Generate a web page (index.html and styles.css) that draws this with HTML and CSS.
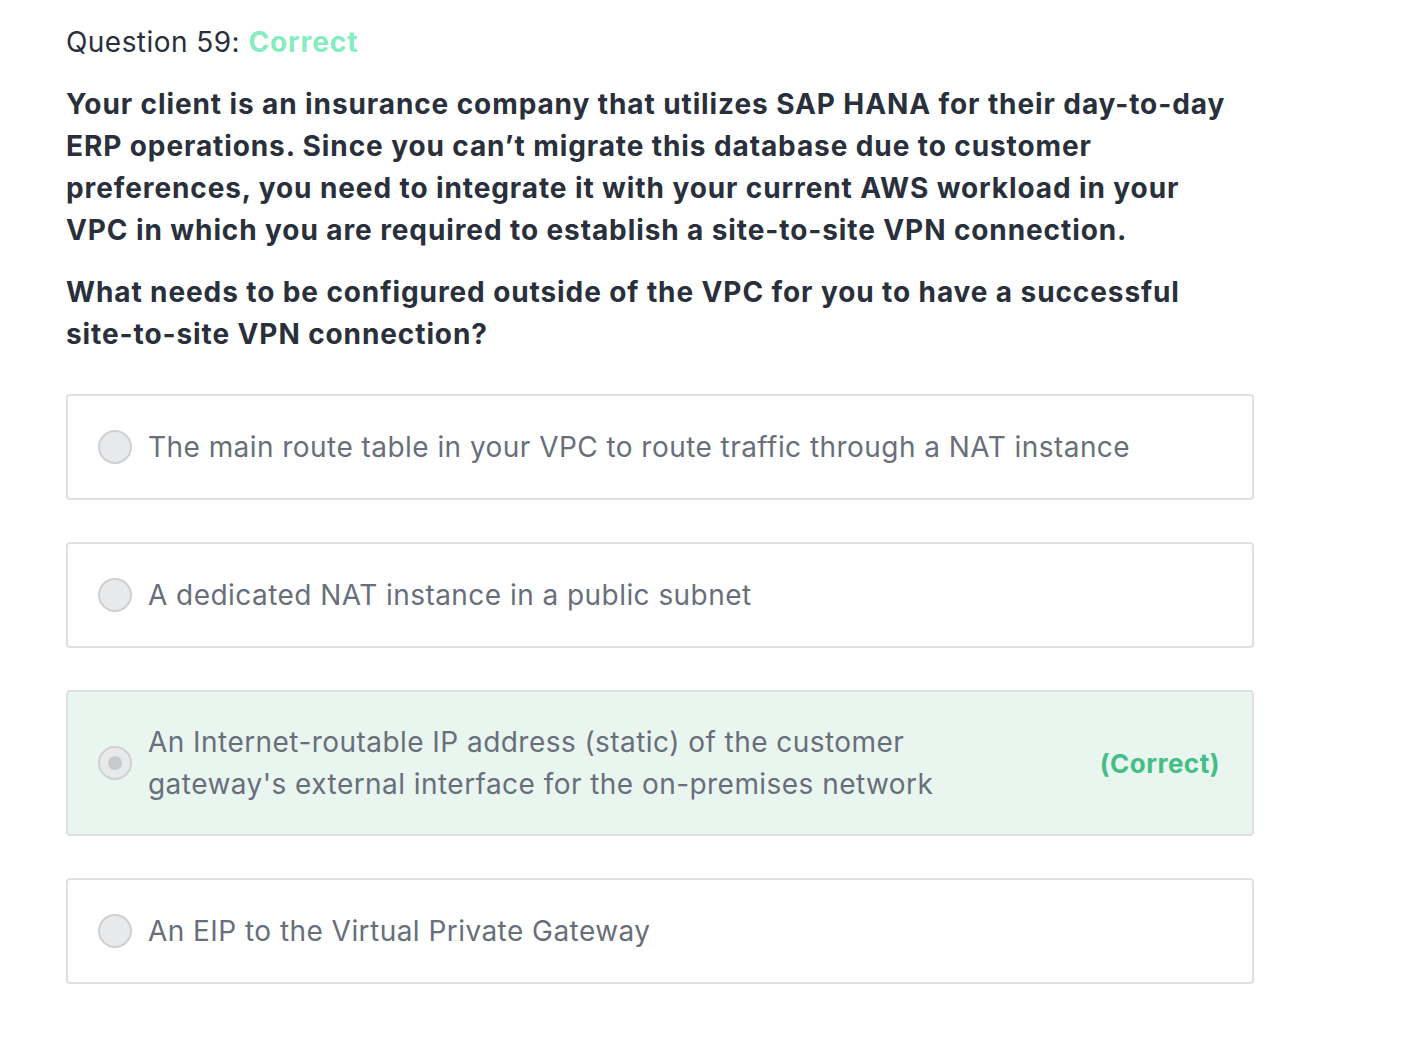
FILE: index.html
```html
<!DOCTYPE html>
<html>
<head>
<meta charset="utf-8">
<link rel="stylesheet" href="styles.css">
</head>
<body>
<div class="page">
  <div class="q-header">Question 59: <span class="status">Correct</span></div>
  <div class="prompt">
    <p>Your client is an insurance company that utilizes SAP HANA for their day-to-day ERP operations. Since you can’t migrate this database due to customer preferences, you need to integrate it with your current AWS workload in your VPC in which you are required to establish a site-to-site VPN connection.</p>
    <p>What needs to be configured outside of the VPC for you to have a successful site-to-site VPN connection?</p>
  </div>
  <ul class="answers">
    <li class="answer"><span class="radio"></span><span class="answer-text">The main route table in your VPC to route traffic through a NAT instance</span></li>
    <li class="answer"><span class="radio"></span><span class="answer-text">A dedicated NAT instance in a public subnet</span></li>
    <li class="answer correct"><span class="radio checked"></span><span class="answer-text">An Internet-routable IP address (static) of the customer gateway's external interface for the on-premises network</span><span class="tag">(Correct)</span></li>
    <li class="answer"><span class="radio"></span><span class="answer-text">An EIP to the Virtual Private Gateway</span></li>
  </ul>
</div>
</body>
</html>
```

FILE: styles.css
```css
* { box-sizing: border-box; }
html, body { margin: 0; padding: 0; background: #fff; }
body {
  font-family: Inter, "Noto Sans", "Liberation Sans", sans-serif;
  color: #29303b;
}
.page {
  width: 1188px;
  margin-left: 66px;
  padding-top: 21px;
}
.q-header {
  font-size: 28px;
  line-height: 42px;
  color: #29303b;
  letter-spacing: 0.45px;
}
.status {
  color: #86ecc2;
  font-weight: 700;
  letter-spacing: 0.9px;
}
.prompt {
  margin-top: 20px;
  width: 1180px;
}
.prompt p {
  margin: 0 0 20px 0;
  font-size: 28px;
  line-height: 42px;
  font-weight: 700;
  color: #29303b;
  letter-spacing: 0.9px;
}
.answers {
  list-style: none;
  margin: 39px 0 0 0;
  padding: 0;
  display: flex;
  flex-direction: column;
  gap: 42px;
}
.answer {
  display: flex;
  align-items: center;
  border: 2px solid #dfe0e1;
  border-radius: 4px;
  padding: 30px 32px 30px 30px;
  min-height: 106px;
  background: #fff;
}
.answer.correct {
  background: #e9f5ef;
  padding-top: 29px;
  padding-bottom: 29px;
}
.radio {
  flex: none;
  width: 34px;
  height: 34px;
  border-radius: 50%;
  background: #e8e9eb;
  border: 2px solid #cfd0d2;
  margin-right: 16px;
  display: flex;
  align-items: center;
  justify-content: center;
}
.radio.checked::after {
  content: "";
  width: 14px;
  height: 14px;
  border-radius: 50%;
  background: #c8c9cb;
}
.answer-text {
  font-size: 28px;
  line-height: 42px;
  color: #686f7a;
  letter-spacing: 0.45px;
}
.correct .answer-text {
  max-width: 840px;
}
.tag {
  flex: none;
  margin-left: auto;
  font-size: 26px;
  font-weight: 700;
  color: #44bd86;
  letter-spacing: 0.5px;
}
```
